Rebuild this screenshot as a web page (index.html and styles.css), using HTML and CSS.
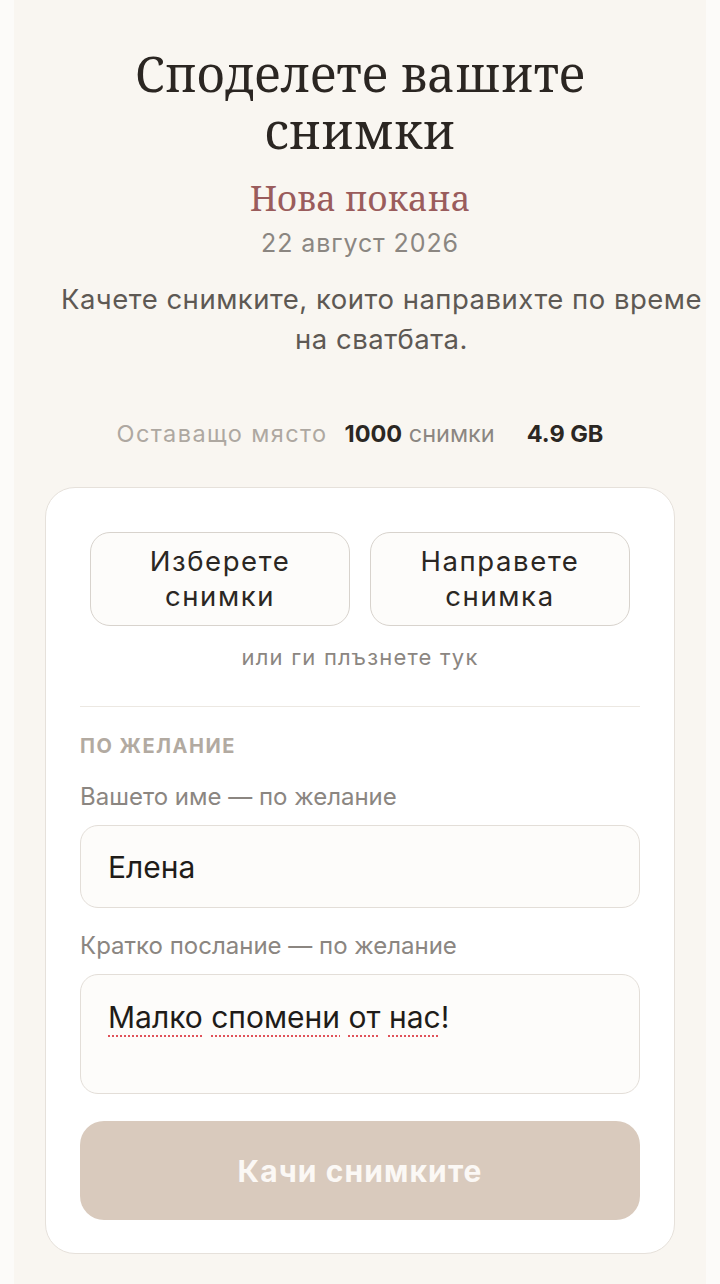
FILE: index.html
```html
<!DOCTYPE html>
<html lang="bg">
<head>
<meta charset="utf-8">
<title>Споделете вашите снимки</title>
<link rel="stylesheet" href="styles.css">
</head>
<body>
<main class="page">
  <header class="hero">
    <h1 class="title">Споделете вашите снимки</h1>
    <p class="event">Нова покана</p>
    <p class="date">22 август 2026</p>
    <p class="intro">Качете снимките, които направихте по време на сватбата.</p>
  </header>

  <div class="stats">
    <span class="stat-label">Оставащо място</span>
    <span class="stat"><b>1000</b> снимки</span>
    <span class="stat"><b>4.9 GB</b></span>
  </div>

  <section class="card">
    <div class="dropzone">
      <div class="pick-row">
        <button class="pick" type="button">Изберете снимки</button>
        <button class="pick" type="button">Направете снимка</button>
      </div>
      <p class="hint">или ги плъзнете тук</p>
    </div>

    <hr class="divider">

    <p class="section-label">По желание</p>

    <label class="field-label">Вашето име — по желание</label>
    <div class="input">Елена</div>

    <label class="field-label">Кратко послание — по желание</label>
    <div class="textarea"><span class="sp">Малко</span> <span class="sp">спомени</span> <span class="sp">от</span> <span class="sp">нас</span>!</div>

    <button class="submit" type="button">Качи снимките</button>
  </section>
</main>
</body>
</html>
```
FILE: styles.css
```css
* { box-sizing: border-box; }
html, body { margin: 0; padding: 0; }
body {
  background: #fcfbf9;
  font-family: Inter, "Noto Sans", sans-serif;
  color: #2b2723;
}
.page {
  margin: 0 14px;
  min-height: 1284px;
  background: #f9f6f1;
  padding: 45px 0 30px;
  overflow: hidden;
}
.hero { text-align: center; }
.title {
  margin: 0 auto;
  width: 520px;
  font-family: "Noto Serif", "Liberation Serif", serif;
  font-weight: 400;
  font-size: 48.5px;
  line-height: 57px;
  color: #2b2622;
}
.event {
  margin: 16px 0 0;
  font-family: "Noto Serif", "Liberation Serif", serif;
  font-size: 34.5px;
  line-height: 46px;
  color: #9a5c5c;
}
.date {
  margin: 6px 0 0;
  font-size: 25px;
  letter-spacing: 0.9px;
  line-height: 32px;
  color: #8b8681;
}
.intro {
  margin: 20px 0 0;
  padding-left: 43px;
  font-size: 27.5px;
  letter-spacing: 0.5px;
  line-height: 40px;
  color: #5e5954;
}
.stats {
  margin-top: 59px;
  display: flex;
  justify-content: center;
  align-items: baseline;
  gap: 17px;
  font-size: 23.5px;
  line-height: 32px;
}
.stat-label { color: #aea8a1; letter-spacing: 1.4px; }
.stat { color: #8b8681; }
.stat b { color: #2b2723; font-weight: 700; }
.stats .stat:last-child { margin-left: 15px; }

.card {
  margin: 37px 31px 0;
  background: #ffffff;
  border: 1.5px solid #e6e1db;
  border-radius: 30px;
  padding: 34px 34px 33px;
}
.dropzone { padding: 10px; }
.pick-row {
  display: grid;
  grid-template-columns: 1fr 1fr;
  gap: 20px;
}
.pick {
  height: 94px;
  border: 1.5px solid #d8d3cd;
  border-radius: 20px;
  background: #fdfcfa;
  font-family: Inter, "Noto Sans", sans-serif;
  font-size: 27.5px;
  letter-spacing: 1.6px;
  line-height: 35px;
  color: #2b2723;
  padding: 0 24px;
}
.hint {
  margin: 16px 0 0;
  text-align: center;
  font-size: 22px;
  letter-spacing: 1.2px;
  line-height: 30px;
  color: #8b8681;
}
.divider {
  margin: 24px 0 0;
  border: 0;
  border-top: 1.5px solid #ece8e2;
}
.section-label {
  margin: 26px 0 0;
  font-size: 20px;
  line-height: 26px;
  font-weight: 700;
  letter-spacing: 1.5px;
  text-transform: uppercase;
  color: #b2aaa1;
}
.field-label {
  display: block;
  margin: 22px 0 12px;
  font-size: 24px;
  line-height: 32px;
  color: #8b8681;
}
.input {
  height: 83px;
  border: 1.5px solid #e3ded8;
  border-radius: 18px;
  background: #fdfcfa;
  padding: 0 27px;
  display: flex;
  align-items: center;
  font-size: 30px;
  color: #1f1c19;
}
.textarea {
  height: 120px;
  border: 1.5px solid #e3ded8;
  border-radius: 18px;
  background: #fdfcfa;
  padding: 22px 27px;
  font-size: 30px;
  line-height: 40px;
  color: #1f1c19;
}
.sp {
  text-decoration: underline dotted #e0525a;
  text-decoration-thickness: 2px;
  text-underline-offset: 7px;
}
.submit {
  display: block;
  width: 100%;
  margin-top: 27px;
  height: 99px;
  border: 0;
  border-radius: 24px;
  background: #d9cabd;
  color: #fbf8f5;
  font-family: Inter, "Noto Sans", sans-serif;
  font-size: 30px;
  letter-spacing: 1.1px;
  font-weight: 700;
}
```
